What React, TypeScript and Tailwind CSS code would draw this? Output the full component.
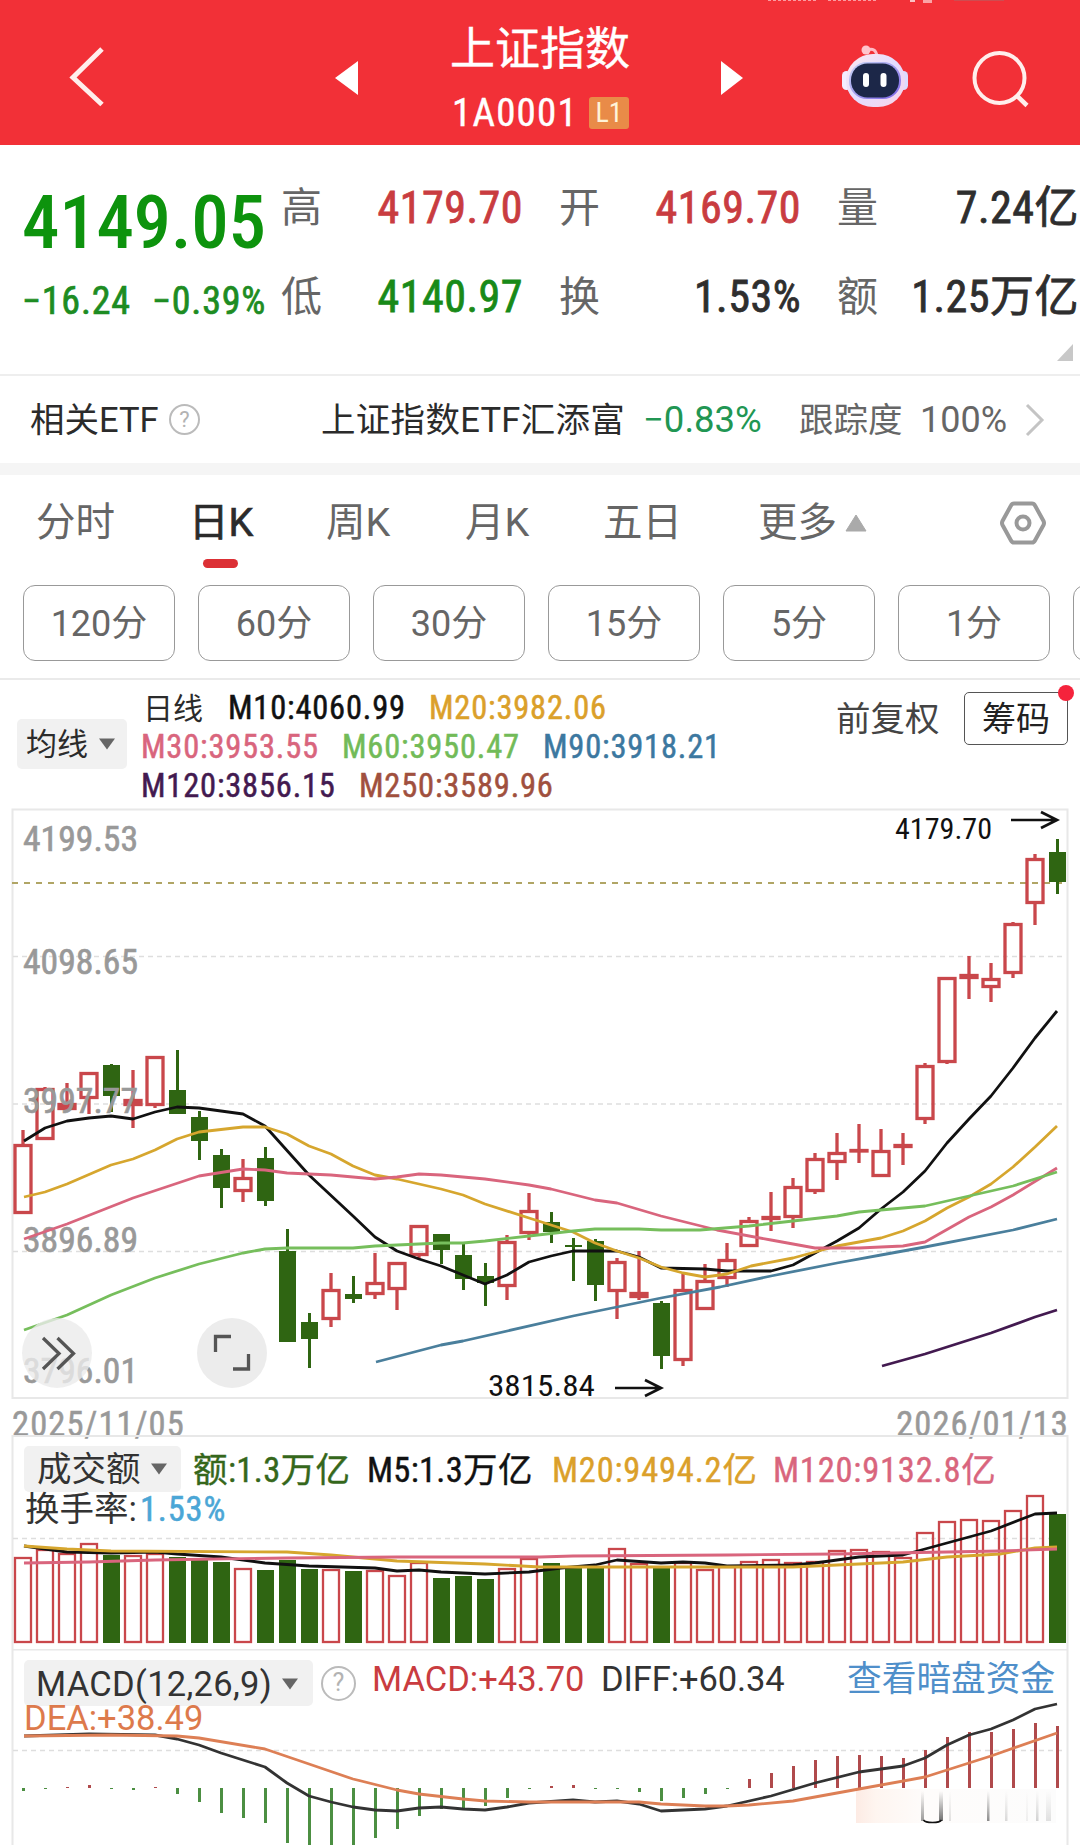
const UP = "#c9474b";
const DOWN = "#2f6512";

/** x 坐标：每根K线间隔22px */
const cx = (i: number) => 23 + i * 22;

/** [方向, 最高, 实体上沿, 实体下沿, 最低] */
const CANDLES: [string, number, number, number, number][] = [
  ["r", 1130, 1144, 1214, 1214],
  ["r", 1087, 1088, 1140, 1140],
  ["r", 1083, 1103, 1110, 1110],
  ["r", 1072, 1072, 1099, 1114],
  ["g", 1064, 1065, 1096, 1112],
  ["r", 1070, 1099, 1106, 1128],
  ["r", 1056, 1056, 1106, 1108],
  ["g", 1050, 1090, 1114, 1114],
  ["g", 1111, 1117, 1141, 1160],
  ["g", 1149, 1155, 1188, 1208],
  ["r", 1159, 1177, 1192, 1202],
  ["g", 1147, 1158, 1201, 1206],
  ["g", 1229, 1251, 1342, 1342],
  ["g", 1313, 1322, 1339, 1368],
  ["r", 1273, 1289, 1320, 1327],
  ["g", 1276, 1294, 1299, 1303],
  ["r", 1253, 1282, 1295, 1299],
  ["r", 1262, 1262, 1290, 1310],
  ["r", 1225, 1225, 1256, 1258],
  ["g", 1234, 1234, 1250, 1264],
  ["g", 1244, 1255, 1279, 1290],
  ["g", 1263, 1276, 1283, 1306],
  ["r", 1235, 1241, 1287, 1300],
  ["r", 1193, 1210, 1234, 1240],
  ["g", 1212, 1222, 1232, 1243],
  ["g", 1238, 1245, 1247, 1281],
  ["g", 1239, 1241, 1285, 1301],
  ["r", 1258, 1261, 1292, 1319],
  ["r", 1251, 1292, 1298, 1300],
  ["g", 1301, 1303, 1356, 1369],
  ["r", 1274, 1289, 1361, 1366],
  ["r", 1264, 1280, 1310, 1310],
  ["r", 1243, 1259, 1279, 1287],
  ["r", 1217, 1220, 1247, 1247],
  ["r", 1192, 1216, 1220, 1231],
  ["r", 1178, 1186, 1218, 1228],
  ["r", 1153, 1158, 1192, 1194],
  ["r", 1133, 1152, 1163, 1180],
  ["r", 1124, 1149, 1152, 1163],
  ["r", 1129, 1150, 1177, 1177],
  ["r", 1133, 1144, 1148, 1165],
  ["r", 1063, 1065, 1120, 1124],
  ["r", 977, 977, 1063, 1064],
  ["r", 956, 974, 979, 999],
  ["r", 963, 978, 988, 1002],
  ["r", 922, 923, 974, 978],
  ["r", 854, 858, 904, 925],
  ["g", 839, 852, 882, 894],
];

const MA_LINES = [
  { color: "#4a7f9c", points: "376,1362 441,1345 463,1341 573,1316 617,1307 661,1298 720,1287 771,1276 837,1263 881,1255 925,1247 1013,1230 1057,1219" },
  { color: "#431a50", points: "882,1366 925,1354 991,1333 1035,1317 1057,1310" },
  { color: "#111111", points: "24,1141 45,1128 67,1121 89,1118 111,1116 133,1119 155,1112 177,1107 199,1108 243,1114 265,1126 309,1175 353,1216 375,1237 397,1251 419,1259 441,1266 463,1275 485,1284 507,1275 529,1262 551,1256 573,1251 617,1251 639,1257 661,1268 705,1269 727,1271 771,1271 793,1265 815,1253 837,1241 859,1228 881,1209 903,1192 925,1171 947,1143 969,1119 991,1096 1013,1068 1035,1038 1057,1011" },
  { color: "#d6a62e", points: "24,1197 45,1192 67,1184 111,1165 133,1159 155,1150 177,1139 199,1132 243,1127 265,1127 287,1134 309,1146 331,1154 353,1166 375,1175 397,1179 441,1189 463,1195 485,1204 529,1218 551,1225 573,1232 595,1243 617,1251 639,1258 661,1267 683,1273 705,1277 727,1274 751,1266 793,1258 815,1252 837,1246 881,1238 903,1231 925,1221 947,1208 969,1197 991,1184 1013,1167 1035,1147 1057,1126" },
  { color: "#d9657d", points: "24,1239 67,1224 133,1198 199,1176 243,1169 265,1170 287,1173 331,1175 375,1179 397,1177 419,1174 441,1175 485,1179 529,1185 551,1189 595,1200 617,1203 661,1216 717,1230 771,1240 815,1248 859,1248 903,1246 925,1242 969,1217 991,1207 1013,1195 1057,1168" },
  { color: "#76be5c", points: "24,1330 67,1315 111,1295 155,1278 199,1264 243,1253 265,1249 287,1248 353,1248 375,1246 441,1243 463,1243 485,1241 529,1236 573,1231 595,1229 639,1229 661,1230 700,1230 749,1226 793,1221 837,1216 859,1212 925,1206 969,1196 1013,1186 1057,1172" },
];

/** 成交额柱顶 */
const VOLUMES = [
  1557, 1549, 1553, 1543, 1555, 1555, 1553, 1557, 1560, 1562, 1568, 1570, 1560, 1569, 1569, 1571,
  1570, 1575, 1562, 1578, 1576, 1579, 1568, 1558, 1563, 1567, 1567, 1548, 1563, 1567, 1562, 1569,
  1566, 1561, 1559, 1562, 1561, 1550, 1549, 1551, 1557, 1532, 1521, 1519, 1520, 1510, 1495, 1514,
];

const VOLUME_LINES = [
  { color: "#111111", points: "24,1546 45,1549 67,1552 111,1553 155,1552 177,1554 221,1557 265,1563 309,1566 375,1568 397,1571 419,1570 441,1572 485,1574 529,1572 561,1568 595,1565 617,1560 661,1563 683,1562 705,1563 727,1566 793,1565 815,1563 859,1557 903,1555 925,1549 991,1531 1035,1514 1057,1513" },
  { color: "#d6a62e", points: "24,1546 67,1549 111,1551 287,1552 331,1555 397,1561 485,1564 540,1567 661,1567 793,1567 859,1564 903,1562 947,1557 1000,1554 1035,1548 1057,1547" },
  { color: "#d9657d", points: "24,1563 89,1562 155,1560 287,1558 397,1557 540,1557 573,1556 727,1555 837,1554 947,1552 1000,1551 1057,1549" },
];

/** MACD 柱端点，零轴在 1788 */
const MACD_ZERO = 1788;
const MACD_BARS = [
  1791, 1789, 1787, 1785, 1789, 1790, 1787, 1794, 1802, 1813, 1818, 1823, 1843, 1850, 1850, 1850,
  1838, 1829, 1816, 1809, 1808, 1806, 1798, 1789, 1786, 1785, 1789, 1789, 1792, 1801, 1798, 1794,
  1789, 1779, 1773, 1766, 1760, 1756, 1755, 1756, 1758, 1750, 1737, 1732, 1732, 1729, 1723, 1726,
];

const MACD_LINES = [
  { color: "#333333", points: "24,1736 89,1734 155,1735 177,1739 199,1745 221,1753 243,1760 265,1767 287,1783 309,1796 331,1802 353,1807 375,1810 397,1811 419,1808 441,1807 463,1809 485,1810 507,1807 529,1803 573,1800 595,1802 617,1801 639,1804 661,1811 705,1809 727,1806 771,1796 815,1783 859,1772 903,1766 925,1758 947,1745 969,1735 991,1729 1013,1720 1035,1709 1057,1704" },
  { color: "#dd7f55", points: "24,1736 111,1735 177,1736 199,1738 265,1749 309,1764 353,1779 397,1790 419,1794 463,1799 485,1801 529,1802 639,1802 661,1804 705,1806 727,1806 749,1805 793,1801 859,1789 925,1777 991,1756 1057,1733" },
];

const Y_LABELS = [
  { text: "4199.53", y: 851 },
  { text: "4098.65", y: 974 },
  { text: "3997.77", y: 1113 },
  { text: "3896.89", y: 1252 },
  { text: "3796.01", y: 1383 },
];

const QUOTES = [
  { label: "高", value: "4179.70", color: "text-[#c93c40]" },
  { label: "开", value: "4169.70", color: "text-[#c93c40]" },
  { label: "量", value: "7.24亿", color: "text-[#2e2e2e]" },
  { label: "低", value: "4140.97", color: "text-[#188a18]" },
  { label: "换", value: "1.53%", color: "text-[#2e2e2e]" },
  { label: "额", value: "1.25万亿", color: "text-[#2e2e2e]" },
];

const PERIODS = ["120分", "60分", "30分", "15分", "5分", "1分", ""];

function Caret() {
  return (
    <svg className="h-[12px] w-[18px] shrink-0" viewBox="0 0 18 12">
      <path d="M1 0.5h16L9 11.5z" fill="#666" />
    </svg>
  );
}

function Help({ className }: { className: string }) {
  return (
    <span
      className={`flex shrink-0 items-center justify-center rounded-full border-2 border-[#bbb] text-[#b3b3b3] ${className}`}
    >
      ?
    </span>
  );
}

function Lines({ data }: { data: { color: string; points: string }[] }) {
  return (
    <>
      {data.map((l) => (
        <polyline key={l.color} points={l.points} fill="none" stroke={l.color} strokeWidth="2.8" strokeLinejoin="round" />
      ))}
    </>
  );
}

function Robot() {
  return (
    <svg className="h-[64px] w-[70px]" viewBox="0 0 70 64">
      <defs>
        <linearGradient id="shell" x1="0" y1="0" x2="1" y2="1">
          <stop offset="0" stopColor="#ffe9ee" />
          <stop offset="0.5" stopColor="#e3dcff" />
          <stop offset="1" stopColor="#fbd3e6" />
        </linearGradient>
        <linearGradient id="rim" x1="0" y1="0" x2="1" y2="1">
          <stop offset="0" stopColor="#c9d6f5" />
          <stop offset="1" stopColor="#7b63e6" />
        </linearGradient>
      </defs>
      <path d="M27 5c6-2 9 0 10 6" fill="none" stroke="#ffb9c4" strokeWidth="3" />
      <circle cx="26" cy="5" r="4.500" fill="#ffc4cc" />
      <rect x="2" y="26" width="9" height="19" rx="4.500" fill="#f3ecff" />
      <rect x="59" y="26" width="9" height="19" rx="4.500" fill="#dcdcff" />
      <rect x="6" y="9" width="59" height="53" rx="27" fill="url(#shell)" />
      <rect x="9" y="17" width="52" height="37" rx="18" fill="url(#rim)" />
      <rect x="11" y="18.500" width="48" height="34" rx="16.500" fill="#1c2748" />
      <rect x="23" y="28" width="6" height="14" rx="3" fill="#fff" />
      <rect x="40.500" y="28" width="6" height="14" rx="3" fill="#fff" />
    </svg>
  );
}

function Header() {
  return (
    <header className="relative flex h-[145px] items-center bg-[#f23037] pt-[10px]">
      {/* 状态栏残留 */}
      <div className="absolute top-0 left-[768px] flex gap-[12px] opacity-70">
        <i className="h-px w-[48px] border-t border-dashed border-[#ffc9cb]" />
        <i className="h-px w-[48px] border-t border-dashed border-[#ffc9cb]" />
        <i className="ml-[22px] h-[2px] w-[5px] bg-white" />
        <i className="-ml-[4px] h-[3px] w-[9px] bg-[#ffd5d6]" />
        <i className="ml-[10px] h-px w-[50px] bg-[#c0585b]" />
      </div>
      <svg className="ml-[68px] h-[62px] w-[38px]" viewBox="0 0 38 62">
        <path d="M34 2L5 30.500l29 27" fill="none" stroke="#ffeeec" strokeWidth="5" />
      </svg>
      <svg className="ml-[229px] h-[34px] w-[23px]" viewBox="0 0 23 34">
        <path d="M23 0v34L0 17z" fill="#fff" />
      </svg>
      <div className="ml-[82px] flex w-[200px] flex-col items-center self-start pt-[12px] text-white">
        <h1 className="h-[56px] text-[45px] leading-[56px] [-webkit-text-stroke:0.4px]">上证指数</h1>
        <div className="mt-[19px] flex h-[32px] items-center gap-[11px] pl-px">
          <span className="text-[39px] leading-[32px] tracking-[1.2px] [-webkit-text-stroke:0.4px]">1A0001</span>
          <span className="flex h-[32px] w-[40px] items-center justify-center rounded-[3px] bg-[#e98b48] text-[28px] leading-none text-[#fff3d8]">
            L1
          </span>
        </div>
      </div>
      <svg className="ml-[81px] h-[34px] w-[22px]" viewBox="0 0 22 34">
        <path d="M0 0v34l22-17z" fill="#fff" />
      </svg>
      <div className="-mt-[2px] ml-[97px]">
        <Robot />
      </div>
      <svg className="ml-[62px] h-[60px] w-[60px]" viewBox="0 0 60 60">
        <circle cx="27.500" cy="30" r="25" fill="none" stroke="#ffeeec" strokeWidth="4" />
        <path d="M44 47l11 10.500" stroke="#ffeeec" strokeWidth="4.500" />
      </svg>
    </header>
  );
}

function Quote() {
  return (
    <section className="relative flex h-[231px] border-b-2 border-[#eee]">
      <div className="w-[281px] shrink-0 pt-[41px] pl-[22px]">
        <div className="h-[73px] text-[75px] leading-[73px] font-medium tracking-[-0.3px] text-[#0d930d]">4149.05</div>
        <div className="mt-[22px] flex h-[40px] text-[38px] leading-[40px] tracking-[0.8px] text-[#1d8c22] [-webkit-text-stroke:0.7px]">
          <span className="w-[130px]">−16.24</span>
          <span>−0.39%</span>
        </div>
      </div>
      <div className="grid w-[798px] grid-cols-3 content-start gap-x-[36px] gap-y-[39px] pt-[38px]">
        {QUOTES.map((q) => (
          <div key={q.label} className="flex h-[50px] items-center justify-between leading-[50px]">
            <span className="text-[41px] text-[#666]">{q.label}</span>
            <span className={`text-[44px] tracking-[0.5px] [-webkit-text-stroke:0.8px] ${q.color}`}>{q.value}</span>
          </div>
        ))}
      </div>
      <svg className="absolute right-[7px] bottom-[13px] h-[17px] w-[16px]" viewBox="0 0 16 17">
        <path d="M16 0v17H0z" fill="#c8c8c8" />
      </svg>
    </section>
  );
}

function EtfRow() {
  return (
    <section className="flex h-[87px] items-center pl-[30px] text-[34.5px] leading-[40px] text-[#2b2b2b] [font-stretch:100%]">
      <span className="w-[139px] shrink-0">相关ETF</span>
      <Help className="h-[31px] w-[31px] text-[22px]" />
      <span className="ml-[121px] w-[322px] shrink-0 tracking-[0.3px]">上证指数ETF汇添富</span>
      <span className="w-[156px] shrink-0 text-[36.500px] text-[#219653]">−0.83%</span>
      <span className="w-[121px] shrink-0 text-[#666]">跟踪度</span>
      <span className="w-[92px] shrink-0 text-[36px] text-[#666]">100%</span>
      <svg className="ml-[13px] h-[34px] w-[20px]" viewBox="0 0 20 34">
        <path d="M2 2l15 15L2 32" fill="none" stroke="#c4c4c4" strokeWidth="3" />
      </svg>
    </section>
  );
}

function Tabs() {
  return (
    <nav className="flex h-[92px] items-center pt-[3px] pl-[36px] text-[39.5px] leading-[50px] text-[#666] [font-stretch:100%]">
      <span className="w-[153px]">分时</span>
      <span className="relative w-[137px] text-[#2b2b2b] [-webkit-text-stroke:0.7px]">
        日K
        <i className="absolute top-[61px] left-[14px] h-[9px] w-[35px] rounded-full bg-[#dc3035]" />
      </span>
      <span className="w-[139px]">周K</span>
      <span className="w-[138px]">月K</span>
      <span className="w-[155px]">五日</span>
      <span className="w-[87px]">更多</span>
      <svg className="h-[18px] w-[22px]" viewBox="0 0 22 18">
        <path d="M11 1L21 17H1z" fill="#aaa" stroke="#aaa" strokeLinejoin="round" />
      </svg>
      <svg className="ml-[132px] h-[46px] w-[48px]" viewBox="0 0 48 46">
        <path d="M15 3.500h18q2 0 3 2l8.500 15.500q1 2 0 4L36 40.500q-1 2-3 2H15q-2 0-3-2L3.500 25q-1-2 0-4L12 5.500q1-2 3-2z" fill="none" stroke="#999" strokeWidth="4" />
        <circle cx="24" cy="23" r="6.500" fill="none" stroke="#999" strokeWidth="4" />
      </svg>
    </nav>
  );
}

function MaLegend() {
  return (
    <section className="flex h-[128px] text-[32.5px] leading-[39px]">
      <div className="mt-[39px] ml-[17px] flex h-[50px] w-[110px] shrink-0 items-center justify-between rounded-[5px] bg-[#f1f1f1] pr-[11px] pl-[9px] text-[31px] text-[#2b2b2b]">
        均线
        <Caret />
      </div>
      <div className="ml-[14px] w-[660px] shrink-0 pt-[9px] tracking-[0.8px] [-webkit-text-stroke:0.5px]">
        <div className="flex">
          <span className="w-[87px] pl-[2px] text-[30px] tracking-normal text-[#2b2b2b] [-webkit-text-stroke:0]">日线</span>
          <span className="w-[201px] text-[#111]">M10:4060.99</span>
          <span className="text-[#dba02a]">M20:3982.06</span>
        </div>
        <div className="flex">
          <span className="w-[201px] text-[#d9657d]">M30:3953.55</span>
          <span className="w-[201px] text-[#72bb58]">M60:3950.47</span>
          <span className="text-[#3c78a0]">M90:3918.21</span>
        </div>
        <div className="flex">
          <span className="w-[218px] text-[#431a50]">M120:3856.15</span>
          <span className="text-[#a0503e]">M250:3589.96</span>
        </div>
      </div>
      <span className="mt-[20px] ml-[35px] w-[128px] shrink-0 text-[34.5px] text-[#444]">前复权</span>
      <div className="relative mt-[12px] flex h-[53px] w-[104px] shrink-0 items-center justify-center rounded-[5px] border-[1.5px] border-[#555] pt-px text-[34px] text-[#222]">
        筹码
        <i className="absolute -top-[8px] -right-[7px] h-[16px] w-[16px] rounded-full bg-[#f5233c]" />
      </div>
    </section>
  );
}

function KChart() {
  return (
    <svg className="block h-[591px] w-[1080px] overflow-visible" viewBox="0 808 1080 591">
      <path d="M12.500 1398V809.500H1067.500V1398z" fill="none" stroke="#e8e8e8" strokeWidth="2" />
      {[956.5, 1104, 1251.5].map((y) => (
        <path key={y} d={`M13 ${y}H1065`} stroke="#dedede" strokeWidth="1.500" strokeDasharray="5 4" />
      ))}
      <path d="M12 883H1067" stroke="#b0a565" strokeWidth="2" strokeDasharray="6 6" />
      {CANDLES.map(([dir, high, top, bottom, low], i) => {
        const x = cx(i);
        if (dir === "g") {
          return (
            <g key={i} fill={DOWN}>
              <rect x={x - 1} y={high} width="3" height={low - high} />
              <rect x={x - 8} y={top} width="17" height={bottom - top} />
            </g>
          );
        }
        return (
          <g key={i} stroke={UP} strokeWidth="3.300">
            <path d={`M${x} ${high}V${top + 1}M${x} ${bottom - 1}V${low}`} />
            <rect
              x={x - 8}
              y={top + 1.5}
              width="16"
              height={Math.max(bottom - top - 3, 0.5)}
              fill={bottom - top < 8 ? UP : "none"}
            />
          </g>
        );
      })}
      <g fill="#999" stroke="#999" strokeWidth="0.600" fontSize="34.500">
        {Y_LABELS.map((l) => (
          <text key={l.text} x="23" y={l.y} textLength="115" lengthAdjust="spacingAndGlyphs">
            {l.text}
          </text>
        ))}
      </g>
      <Lines data={MA_LINES} />
      <g fontSize="29" fill="#111">
        <text x="895" y="839" textLength="97" lengthAdjust="spacingAndGlyphs">4179.70</text>
        <text x="488" y="1396" textLength="107" lengthAdjust="spacingAndGlyphs">3815.84</text>
      </g>
      <path d="M1011 820h45M1041 812l16 8-16 8M615 1388h45M645 1380l16 8-16 8" fill="none" stroke="#111" strokeWidth="2.700" />
      <circle cx="57" cy="1353" r="35" fill="#ebebeb" fillOpacity="0.8" />
      <circle cx="232" cy="1353" r="35" fill="#ececec" />
      <path d="M43 1338l16 15.500-16 15.500M57.500 1338l16 15.500-16 15.500M215.500 1352v-15.500h15.500M233 1369h15.500v-15" fill="none" stroke="#555" strokeWidth="3.300" />
    </svg>
  );
}

function VolumePanel() {
  return (
    <section className="grid h-[214px]">
      <svg className="col-start-1 row-start-1 h-[214px] w-[1080px]" viewBox="0 1435 1080 214">
        <path d="M12.500 1649V1436H1067.500V1649" fill="none" stroke="#e8e8e8" strokeWidth="2" />
        <path d="M13 1538.500H1065" stroke="#dedede" strokeWidth="1.500" strokeDasharray="5 4" />
        {VOLUMES.map((top, i) =>
          CANDLES[i][0] === "g" ? (
            <rect key={i} x={cx(i) - 8} y={top} width="17" height={1643 - top} fill={DOWN} />
          ) : (
            <rect key={i} x={cx(i) - 8} y={top + 1} width="16" height={1641 - top} fill="none" stroke={UP} strokeWidth="2.300" />
          ),
        )}
        <Lines data={VOLUME_LINES} />
      </svg>
      <div className="col-start-1 row-start-1 self-start pt-[11px] pl-[24px] text-[34.5px]">
        <div className="flex h-[46px] items-center leading-[46px]">
          <div className="flex h-[46px] w-[157px] items-center justify-between rounded-[5px] bg-[#f1f1f1] pr-[13px] pl-[13px] text-[#333]">
            成交额
            <Caret />
          </div>
          <span className="ml-[12px] w-[174px] pt-px tracking-[0.4px] text-[#35671b] [-webkit-text-stroke:0.4px]">额:1.3万亿</span>
          <span className="w-[185px] pt-px tracking-[0.3px] text-[#111] [-webkit-text-stroke:0.4px]">M5:1.3万亿</span>
          <span className="w-[221px] pt-px tracking-[0.8px] text-[#dba02a] [-webkit-text-stroke:0.4px]">M20:9494.2亿</span>
          <span className="pt-px tracking-[0.8px] text-[#d9657d] [-webkit-text-stroke:0.4px]">M120:9132.8亿</span>
        </div>
        <div className="flex leading-[34px] text-[#333]">
          <span className="w-[116px] pl-[1px]">换手率:</span>
          <span className="tracking-[0.8px] text-[#4ba6d6] [-webkit-text-stroke:0.5px]">1.53%</span>
        </div>
      </div>
    </section>
  );
}

function MacdPanel() {
  return (
    <section className="grid h-[196px] overflow-hidden">
      <svg className="col-start-1 row-start-1 h-[196px] w-[1080px]" viewBox="0 1649 1080 196">
        <defs>
          <linearGradient id="smear" x1="0" y1="0" x2="0" y2="1">
            <stop offset="0" stopColor="#666" stopOpacity="0" />
            <stop offset="1" stopColor="#555" stopOpacity="0.85" />
          </linearGradient>
          <linearGradient id="blush" x1="0" y1="0" x2="1" y2="0">
            <stop offset="0" stopColor="#fdebe4" />
            <stop offset="0.1" stopColor="#fef5f0" />
            <stop offset="0.350" stopColor="#fefcfb" />
            <stop offset="1" stopColor="#fcfcfc" />
          </linearGradient>
        </defs>
        <path d="M12.500 1850V1649.500H1067.500V1850" fill="none" stroke="#e8e8e8" strokeWidth="2" />
        <path d="M13 1750.500H1065" stroke="#dedede" strokeWidth="1.500" strokeDasharray="5 4" />
        <rect x="856" y="1789" width="200" height="34" fill="url(#blush)" />
        {MACD_BARS.map((y, i) => (
          <rect
            key={i}
            x={cx(i) - 1}
            y={Math.min(y, MACD_ZERO)}
            width="3"
            height={Math.abs(y - MACD_ZERO)}
            fill={y < MACD_ZERO ? "#b04a4c" : "#4c8f42"}
          />
        ))}
        <Lines data={MACD_LINES} />
        <g fill="url(#smear)">
          <rect x="921" y="1791" width="3" height="30" opacity="0.7" />
          <rect x="939" y="1791" width="4" height="30" />
          <rect x="949" y="1791" width="2" height="30" opacity="0.2" />
          <rect x="987" y="1791" width="2.500" height="30" opacity="0.8" />
          <rect x="1005" y="1791" width="2.500" height="30" opacity="0.25" />
          <rect x="1026" y="1791" width="2" height="30" opacity="0.100" />
          <rect x="1036" y="1791" width="2.500" height="30" opacity="0.3" />
          <rect x="1046" y="1791" width="5" height="30" opacity="0.2" />
        </g>
        <path d="M923.500 1820q1.500 2.500 9 2.500t9-2.500" fill="none" stroke="#111" strokeWidth="1.500" />
      </svg>
      <div className="col-start-1 row-start-1 self-start pt-[11px] pl-[24px] text-[34.5px] [font-stretch:100%]">
        <div className="flex h-[46px] items-center leading-[46px]">
          <div className="flex h-[46px] w-[289px] items-center justify-between rounded-[5px] bg-[#f1f1f1] pt-px pr-[14px] pl-[12px] tracking-[0.3px] text-[#333]">
            MACD(12,26,9)
            <Caret />
          </div>
          <Help className="ml-[8px] h-[35px] w-[35px] text-[25px]" />
          <span className="ml-[16px] w-[229px] pb-[9px] text-[#c93c40]">MACD:+43.70</span>
          <span className="w-[246px] pb-[9px] tracking-[-0.1px] text-[#333]">DIFF:+60.34</span>
          <span className="pb-[9px] text-[34.700px] text-[#4f8fca]">查看暗盘资金</span>
        </div>
        <div className="leading-[24px] text-[#dd7a4c]">DEA:+38.49</div>
      </div>
    </section>
  );
}

export default function App() {
  return (
    <main className="h-[1845px] w-[1080px] overflow-hidden bg-white font-['Roboto','Noto_Sans_CJK_SC',sans-serif] whitespace-nowrap [font-stretch:87%]">
      <Header />
      <Quote />
      <EtfRow />
      <div className="h-[12px] bg-[#f5f5f5]" />
      <Tabs />
      <div className="flex h-[113px] gap-[23px] overflow-hidden border-b-2 border-[#eaeaea] pt-[18px] pl-[23px] text-[36px] leading-[40px] text-[#666] [font-stretch:100%]">
        {PERIODS.map((p) => (
          <div
            key={p}
            className="flex h-[76px] w-[152px] shrink-0 items-center justify-center rounded-[12px] border border-[#999] pt-px"
          >
            {p}
          </div>
        ))}
      </div>
      <MaLegend />
      <KChart />
      <div className="flex h-[36px] justify-between pt-[13px] pr-[12px] pl-[12px] text-[34.5px] leading-[24px] tracking-[1.100px] text-[#999] [-webkit-text-stroke:0.5px]">
        <span>2025/11/05</span>
        <span className="-mr-px">2026/01/13</span>
      </div>
      <VolumePanel />
      <MacdPanel />
    </main>
  );
}
